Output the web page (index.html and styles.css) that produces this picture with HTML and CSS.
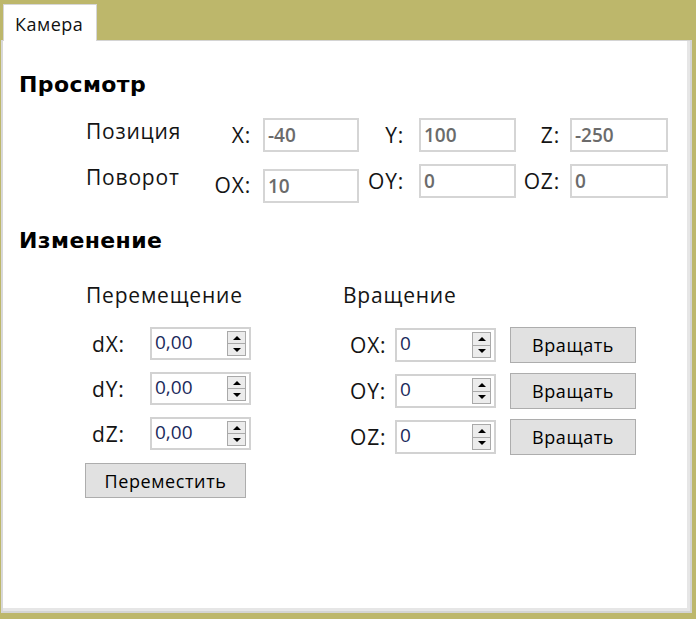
FILE: index.html
```html
<!DOCTYPE html>
<html lang="ru">
<head>
<meta charset="utf-8">
<title>Камера</title>
<link rel="stylesheet" href="styles.css">
</head>
<body>
<div class="window">
  <div class="tabs">
    <div class="tab">Камера</div>
  </div>
  <div class="panel">
    <h2 class="heading">Просмотр</h2>
    <div class="view-grid">
      <span class="lbl">Позиция</span>
      <span class="axis">X:</span>
      <div class="field">-40</div>
      <span class="axis axis-mid">Y:</span>
      <div class="field">100</div>
      <span class="axis axis-end">Z:</span>
      <div class="field">-250</div>

      <span class="lbl">Поворот</span>
      <span class="axis axis-low">OX:</span>
      <div class="field field-low">10</div>
      <span class="axis axis-mid">OY:</span>
      <div class="field">0</div>
      <span class="axis axis-end">OZ:</span>
      <div class="field">0</div>
    </div>

    <h2 class="heading heading-2">Изменение</h2>
    <div class="change">
      <div class="group move">
        <div class="group-title">Перемещение</div>
        <div class="rows move-rows">
          <div class="row"><span class="row-lbl">dX:</span><div class="spin"><span class="val">0,00</span><span class="spinner"><span class="up"></span><span class="down"></span></span></div></div>
          <div class="row"><span class="row-lbl">dY:</span><div class="spin"><span class="val">0,00</span><span class="spinner"><span class="up"></span><span class="down"></span></span></div></div>
          <div class="row"><span class="row-lbl">dZ:</span><div class="spin"><span class="val">0,00</span><span class="spinner"><span class="up"></span><span class="down"></span></span></div></div>
        </div>
        <button class="btn btn-move">Переместить</button>
      </div>
      <div class="group rotate">
        <div class="group-title">Вращение</div>
        <div class="rows rot-rows">
          <div class="row"><span class="row-lbl">OX:</span><div class="spin"><span class="val">0</span><span class="spinner"><span class="up"></span><span class="down"></span></span></div><button class="btn btn-rot">Вращать</button></div>
          <div class="row"><span class="row-lbl">OY:</span><div class="spin"><span class="val">0</span><span class="spinner"><span class="up"></span><span class="down"></span></span></div><button class="btn btn-rot">Вращать</button></div>
          <div class="row"><span class="row-lbl">OZ:</span><div class="spin"><span class="val">0</span><span class="spinner"><span class="up"></span><span class="down"></span></span></div><button class="btn btn-rot">Вращать</button></div>
        </div>
      </div>
    </div>
  </div>
</div>
</body>
</html>
```

FILE: styles.css
```css
* { box-sizing: border-box; }
html, body { margin: 0; padding: 0; }
body {
  background: #bdb76b;
  width: 696px;
  height: 619px;
  font-family: "Open Sans", "Noto Sans", sans-serif;
  color: #141414;
}
.window {
  display: flex;
  flex-direction: column;
  height: 619px;
  padding: 4px 4px 6px 1px;
}
.tabs {
  display: flex;
  padding-left: 2px;
  position: relative;
  z-index: 1;
}
.tab {
  width: 94px;
  height: 37px;
  background: #fff;
  border: 1px solid #d6d6d6;
  border-bottom: none;
  font-size: 18px;
  letter-spacing: 0.5px;
  line-height: 20px;
  padding: 9px 0 0 11px;
  margin-bottom: -1px;
  color: #111;
}
.panel {
  flex: 1;
  background: #fff;
  border: 1px solid #d4d4d4;
  border-width: 1px 2px 2px 2px;
  border-left-color: #d8d8d8;
  box-shadow: inset -3px -3px 0 #e6e6e6;
}
.heading {
  margin: 32px 0 0 16px;
  font-family: "DejaVu Sans", sans-serif;
  font-weight: bold;
  font-size: 22px;
  letter-spacing: 0.4px;
  line-height: 24px;
  color: #000;
}
.heading-2 { margin-top: 26px; }

.view-grid {
  margin: 21px 0 0 83px;
  display: grid;
  grid-template-columns: 122px 55px 96px 60px 97px 54px 98px;
  grid-template-rows: 34px 39px;
  row-gap: 12px;
  align-items: start;
  font-size: 21px;
  letter-spacing: 0.8px;
}
.lbl {
  line-height: 26px;
  margin-top: 0;
}
.axis {
  text-align: right;
  padding-right: 12px;
  line-height: 26px;
  margin-top: 4px;
}
.axis-mid { padding-right: 15px; }
.axis-end { padding-right: 10px; }
.axis-low { margin-top: 8px; }
.field {
  height: 34px;
  border: 2px solid #d5d5d5;
  background: #fff;
  color: #6b6b6b;
  font-weight: 600;
  font-size: 19px;
  letter-spacing: 0;
  line-height: 30px;
  padding-left: 3px;
}
.field-low { margin-top: 5px; }

.change {
  display: flex;
  margin: 30px 0 0 83px;
  font-size: 21px;
  letter-spacing: 0.8px;
}
.group-title {
  line-height: 24px;
}
.move { width: 257px; }
.rows {
  display: flex;
  flex-direction: column;
  margin-top: 20px;
}
.move-rows { gap: 12px; }
.rot-rows { gap: 10px; }
.row {
  display: flex;
  align-items: center;
}
.move .row { height: 33px; }
.move .row-lbl { width: 64px; padding-left: 6px; }
.rotate .row { height: 36px; }
.rotate .row-lbl { width: 52px; padding-left: 7px; }
.spin {
  position: relative;
  width: 101px;
  height: 33px;
  border: 2px solid #d2d2d2;
  background: #fff;
}
.rotate .spin { height: 34px; }
.val {
  display: block;
  font-size: 19px;
  letter-spacing: 0;
  line-height: 26px;
  padding-left: 3px;
  color: #1b2a5c;
}
.spinner {
  position: absolute;
  right: 3px;
  top: 2px;
  bottom: 2px;
  width: 19px;
  display: flex;
  flex-direction: column;
  border: 1px solid #a9a9a9;
  background: #ececec;
}
.spinner span {
  flex: 1;
  display: flex;
  align-items: center;
  justify-content: center;
}
.spinner .up { border-bottom: 1px solid #a9a9a9; }
.spinner .up::after {
  content: "";
  border-left: 4px solid transparent;
  border-right: 4px solid transparent;
  border-bottom: 4px solid #000;
}
.spinner .down::after {
  content: "";
  border-left: 4px solid transparent;
  border-right: 4px solid transparent;
  border-top: 4px solid #000;
}
.btn {
  font-family: "Open Sans", "Noto Sans", sans-serif;
  font-size: 18px;
  letter-spacing: 0.6px;
  color: #000;
  background: #e1e1e1;
  border: 1px solid #adadad;
  padding: 0;
  border-radius: 0;
}
.btn-move {
  display: block;
  margin: 13px 0 0 -1px;
  width: 161px;
  height: 35px;
}
.btn-rot {
  margin-left: 14px;
  width: 126px;
  height: 36px;
}
```
